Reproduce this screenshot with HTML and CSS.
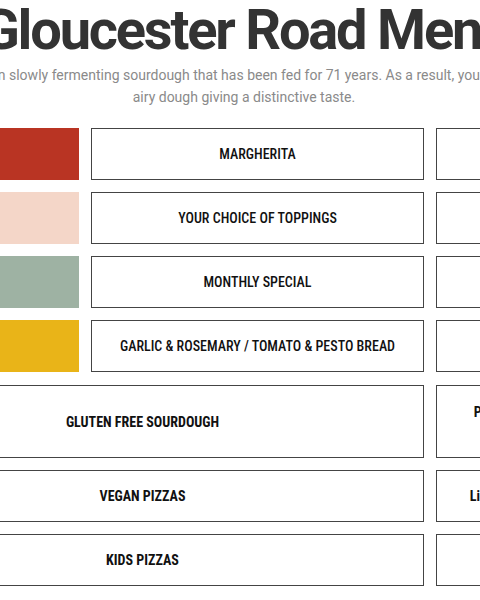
FILE: index.html
```html
<!DOCTYPE html>
<html lang="en">
<head>
<meta charset="utf-8">
<title>Gloucester Road Menu</title>
<link rel="stylesheet" href="styles.css">
</head>
<body>
<div class="page">
  <header class="intro">
    <h1 class="title">Gloucester Road Menu</h1>
    <p class="lede"><span class="line">Our pizzas are made with our own slowly fermenting sourdough that has been fed for 71 years. As a result, you get a wonderfully light, chewy and</span><span class="line">airy dough giving a distinctive taste.</span></p>
  </header>
  <main class="menu">
    <div class="col col-left">
      <div class="row"><div class="swatch red"></div><a class="item">MARGHERITA</a></div>
      <div class="row"><div class="swatch pink"></div><a class="item">YOUR CHOICE OF TOPPINGS</a></div>
      <div class="row"><div class="swatch sage"></div><a class="item">MONTHLY SPECIAL</a></div>
      <div class="row"><div class="swatch yellow"></div><a class="item">GARLIC &amp; ROSEMARY / TOMATO &amp; PESTO BREAD</a></div>
      <a class="item tall bold">GLUTEN FREE SOURDOUGH</a>
      <a class="item bold">VEGAN PIZZAS</a>
      <a class="item bold">KIDS PIZZAS</a>
    </div>
    <div class="col col-right">
      <a class="item side">SIDES</a>
      <a class="item side">SALADS</a>
      <a class="item side">DIPS</a>
      <a class="item side">DESSERTS</a>
      <a class="item side tall bold">PIZZA BY THE SLICE<br>LUNCH</a>
      <a class="item side bold">Lighter Lunch Options</a>
      <a class="item side bold">DRINKS</a>
    </div>
  </main>
</div>
</body>
</html>
```
FILE: styles.css
```css
html, body {
  margin: 0;
  padding: 0;
  background: #ffffff;
  overflow: hidden;
}
body {
  width: 480px;
  height: 600px;
}
.page {
  width: 766px;
  margin-left: -139px;
  font-family: Roboto, "Noto Sans", sans-serif;
}
.intro {
  display: flex;
  flex-direction: column;
  align-items: center;
  text-align: center;
}
.title {
  margin: 2px 0 0 4px;
  font-family: Roboto, sans-serif;
  font-weight: 700;
  font-size: 56px;
  letter-spacing: -2.2px;
  line-height: 56px;
  color: #333333;
  white-space: nowrap;
}
.lede {
  margin: 6px 0 0;
  font-size: 14px;
  line-height: 22px;
  color: #8a8a8a;
  white-space: nowrap;
  display: flex;
  flex-direction: column;
  align-items: center;
}
.line {
  display: block;
}
.menu {
  display: flex;
  gap: 12px;
  margin-top: 20px;
}
.col {
  display: flex;
  flex-direction: column;
  gap: 12px;
}
.col-left {
  width: 563px;
}
.col-right {
  width: 191px;
}
.row {
  display: flex;
  gap: 12px;
  height: 52px;
}
.swatch {
  width: 218px;
  flex: none;
}
.red { background: #b93423; }
.pink { background: #f4d6c8; }
.sage { background: #9eb2a3; }
.yellow { background: #e9b418; }
.item {
  display: flex;
  align-items: center;
  justify-content: center;
  text-align: center;
  box-sizing: border-box;
  height: 52px;
  flex: 1;
  border: 1.5px solid #444444;
  font-family: "Roboto Condensed", Roboto, sans-serif;
  font-size: 14px;
  font-weight: 500;
  line-height: 20px;
  color: #111111;
  padding: 0 10px;
  white-space: nowrap;
}
.col > .item {
  flex: none;
}
.tall {
  height: 73px;
  margin-top: 1px;
}
.bold {
  font-weight: 700;
}
```
